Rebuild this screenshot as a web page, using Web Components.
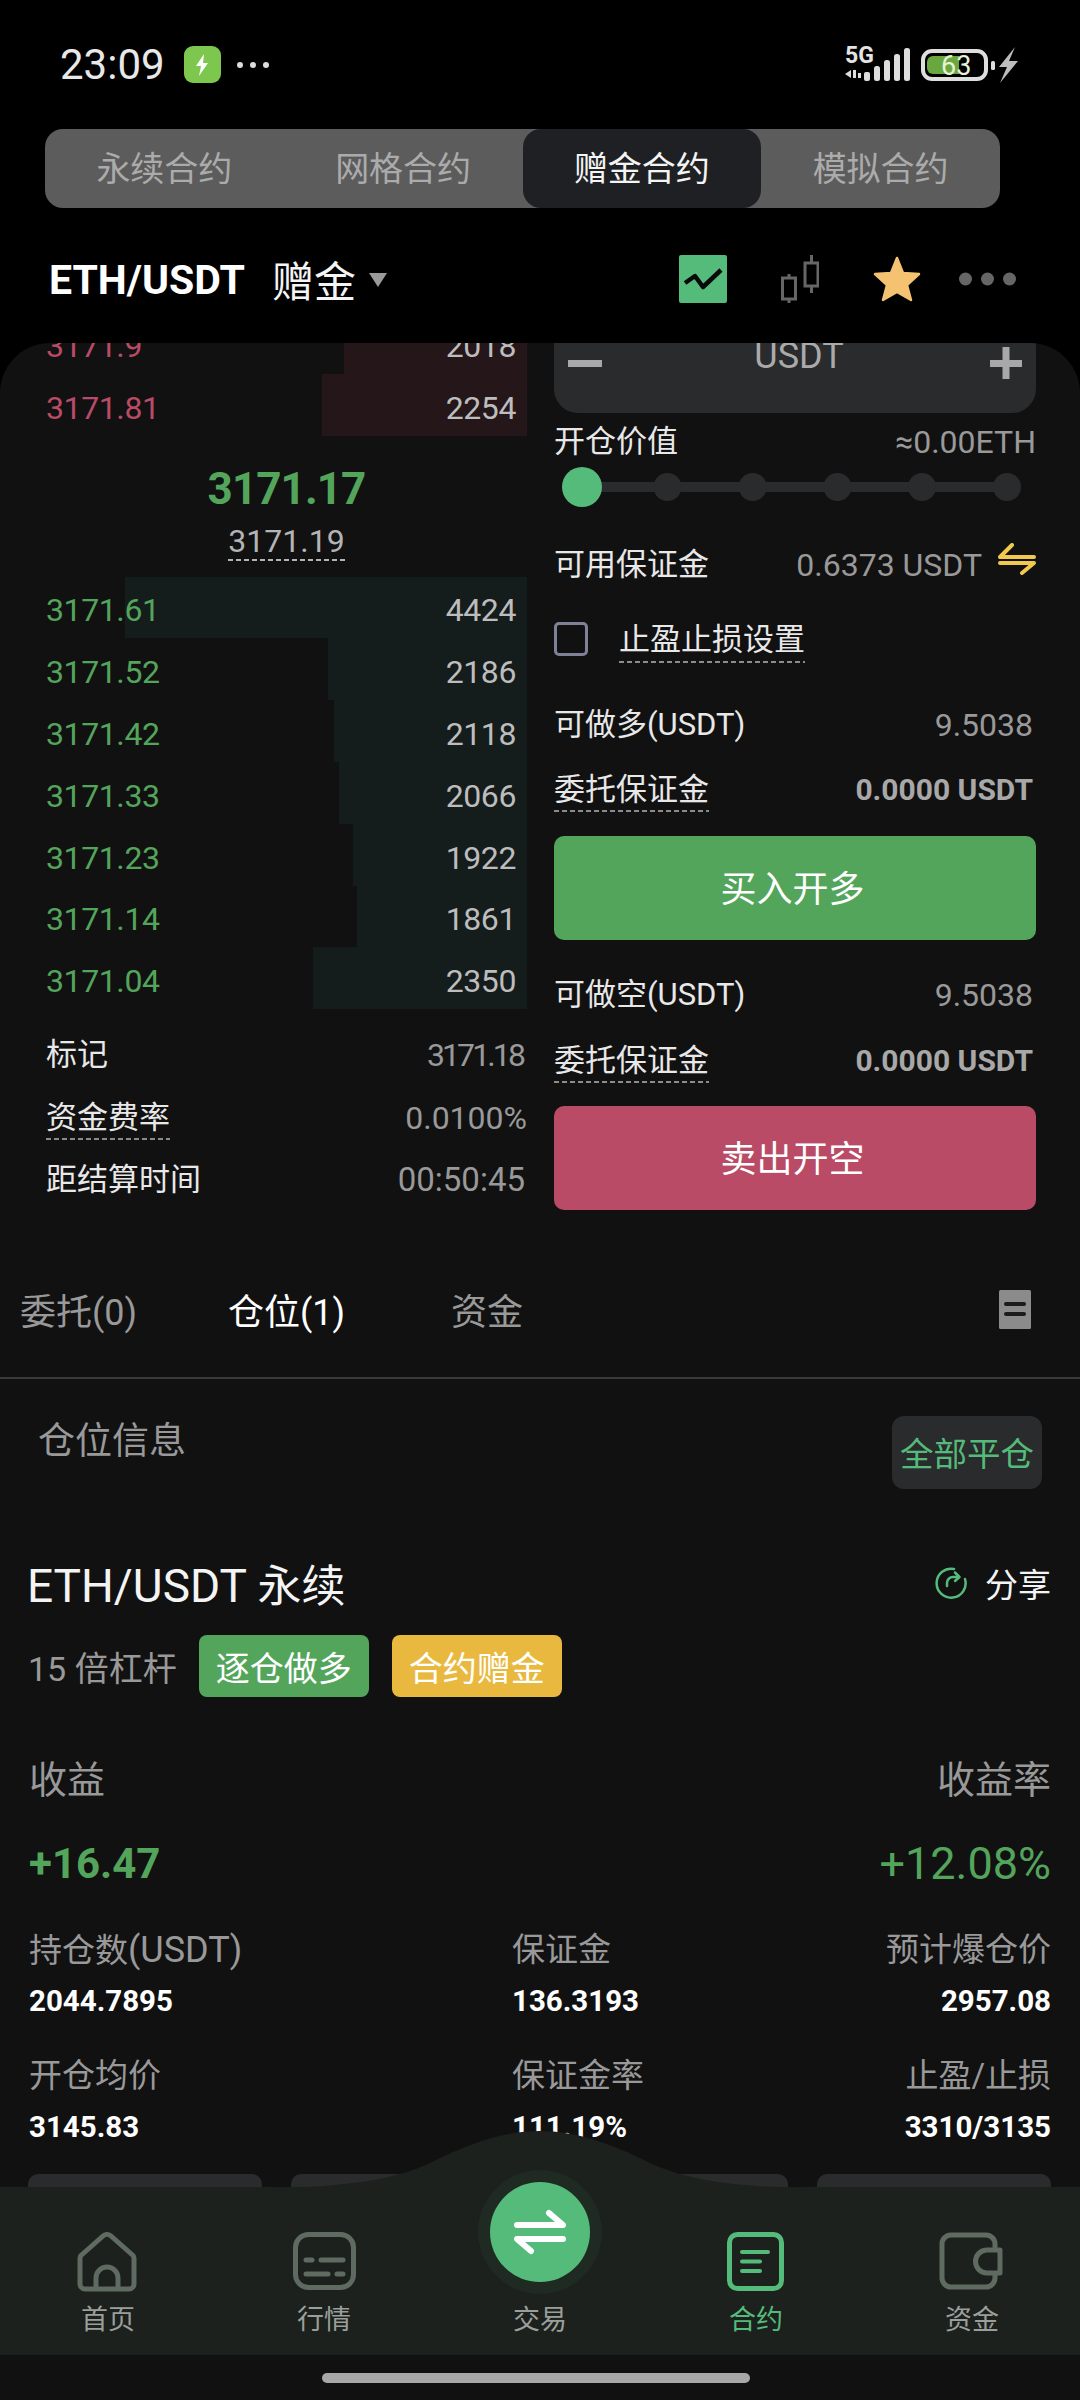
<!DOCTYPE html>
<html lang="zh">
<head>
<meta charset="utf-8">
<title>赠金合约</title>
<style>
    html, body { margin: 0; padding: 0; background: #000; }
    body {
        width: 1080px;
        height: 2400px;
        overflow: hidden;
        position: relative;
        color: #e8e8e8;
        font-family: Roboto, "Noto Sans CJK SC", sans-serif;
    }
</style>
</head>
<body>
<status-bar></status-bar>
<contract-tabs></contract-tabs>
<pair-header></pair-header>
<trade-panel></trade-panel>
<bottom-nav></bottom-nav>
<div style="position:absolute;left:322px;top:2373px;width:428px;height:10px;border-radius:5px;background:#a8a8a8"></div>

<script>
class StatusBar extends HTMLElement {
    connectedCallback() {
        let shadowRoot = this.attachShadow({ mode: 'open' });
        shadowRoot.innerHTML = `
        <style>
            :host { display: flex; align-items: center; height: 129px; padding: 0 62px 0 60px; width: 958px; }
            .time { font-size: 42px; line-height: 50px; color: #e8e8e8; }
            .app { width: 37px; height: 37px; margin-left: 19px; border-radius: 9px; background: #7ec74f; display: flex; align-items: center; justify-content: center; }
            .more { margin-left: 16px; display: flex; gap: 7px; }
            .more i { width: 6px; height: 6px; border-radius: 50%; background: #dcdcdc; }
            .right { margin-left: auto; display: flex; }
        </style>
        <span class="time">23:09</span>
        <span class="app"><svg width="18" height="24" viewBox="0 0 18 24"><path d="M11 1 L3 13 H8 L6 23 L15 10 H10 Z" fill="#fff"/></svg></span>
        <span class="more"><i></i><i></i><i></i></span>
        <svg class="right" width="175" height="56" viewBox="0 -8 175 56">
            <text x="2" y="18" font-size="23" font-weight="700" fill="#e4e4e4" font-family="Roboto, sans-serif">5G</text>
            <path d="M2 29 l6-4 v8 Z M10 25 h3 v8 h-3 Z M15 28 h3 v5 h-3 Z" fill="#ddd"/>
            <rect x="21" y="27" width="6" height="9" rx="2" fill="#ddd"/>
            <rect x="31" y="21" width="6" height="15" rx="2.5" fill="#ddd"/>
            <rect x="41" y="15" width="6" height="21" rx="2.5" fill="#ddd"/>
            <rect x="51" y="9" width="6" height="27" rx="2.5" fill="#ddd"/>
            <rect x="61" y="3" width="6" height="33" rx="2.5" fill="#ddd"/>
            <rect x="80" y="6" width="63" height="28" rx="9" fill="none" stroke="#dedede" stroke-width="4"/>
            <path d="M90 11 H116 V29 H90 a6 6 0 0 1-6-6 V17 a6 6 0 0 1 6-6 Z" fill="#6aa83f"/>
            <text x="98" y="30" font-size="27" fill="#e4f2d8" font-family="Roboto, sans-serif">63</text>
            <rect x="148" y="16" width="4" height="9" rx="1.5" fill="#ddd"/>
            <path d="M172 2 L156 22 H164 L157 38 L175 16 H166 Z" fill="#bdbdbd"/>
        </svg>
        `;
    }
}

class ContractTabs extends HTMLElement {
    connectedCallback() {
        let shadowRoot = this.attachShadow({ mode: 'open' });
        let tabs = ['永续合约', '网格合约', '赠金合约', '模拟合约'];
        shadowRoot.innerHTML = `
        <style>
            :host { display: grid; grid-template-columns: repeat(4, 1fr); width: 955px; height: 79px; margin-left: 45px; border-radius: 18px; background: #5c5c5c; }
            div { display: flex; align-items: center; justify-content: center; box-sizing: border-box; padding-bottom: 5px; font-size: 34px; color: #ababab; border-radius: 18px; }
            .on { background: #1f2023; color: #f4f4f4; }
        </style>
        ${tabs.map((t, i) => `<div class="${i === 2 ? 'on' : ''}">${t}</div>`).join('')}
        `;
    }
}

class PairHeader extends HTMLElement {
    connectedCallback() {
        let shadowRoot = this.attachShadow({ mode: 'open' });
        shadowRoot.innerHTML = `
        <style>
            :host { display: flex; align-items: center; height: 126px; padding: 9px 64px 0 49px; width: 967px; }
            .pair { font-size: 41px; font-weight: 700; color: #fff; }
            .kind { font-size: 42px; color: #f4f4f4; margin-left: 27px; margin-top: -3px; }
            .caret { margin-left: 13px; width: 0; height: 0; border-left: 9px solid transparent; border-right: 9px solid transparent; border-top: 14px solid #9a9a9a; }
            .icons { margin-left: auto; display: flex; align-items: center; margin-top: -2px; }
        </style>
        <span class="pair">ETH/USDT</span>
        <span class="kind">赠金</span>
        <span class="caret"></span>
        <span class="icons">
            <svg width="48" height="48" viewBox="0 0 48 48"><rect width="48" height="48" rx="2" fill="#55bb7b"/><path d="M6 28 L16 21 L24 32 L42 15" fill="none" stroke="#0a0a0a" stroke-width="4.5" stroke-linejoin="round"/></svg>
            <svg style="margin-left:54px" width="38" height="48" viewBox="0 0 38 48" fill="none" stroke="#666" stroke-width="3"><rect x="1.500" y="23" width="13" height="21"/><path d="M8 19 V23 M8 44 V48"/><rect x="24" y="8" width="13" height="23"/><path d="M30.500 0 V8 M30.500 31 V38"/></svg>
            <svg style="margin-left:54px" width="48" height="48" viewBox="0 0 48 48"><path d="M24 3 L30 18 L46 19 L34 30 L38 45 L24 37 L10 45 L14 30 L2 19 L18 18 Z" fill="#f5c272" stroke="#f5c272" stroke-width="2.5" stroke-linejoin="round"/></svg>
            <svg style="margin-left:38px" width="57" height="14" viewBox="0 0 57 14" fill="#666"><circle cx="6.500" cy="7" r="6.500"/><circle cx="28.500" cy="7" r="6.500"/><circle cx="50.500" cy="7" r="6.500"/></svg>
        </span>
        `;
    }
}

class DashText extends HTMLElement {
    connectedCallback() {
        let shadowRoot = this.attachShadow({ mode: 'open' });
        shadowRoot.innerHTML = `
        <style>
            :host { display: inline-block; position: relative; }
            i { position: absolute; left: 0; right: 0; bottom: var(--dash-bottom, -5px); height: 2px; background: repeating-linear-gradient(to right, var(--dash-color, #8c8c8c) 0 5px, transparent 5px 8px); }
        </style>
        <slot></slot><i></i>
        `;
    }
}

class InfoRow extends HTMLElement {
    connectedCallback() {
        let shadowRoot = this.attachShadow({ mode: 'open' });
        shadowRoot.innerHTML = `
        <style>
            :host { display: flex; align-items: center; justify-content: space-between; height: 60px; font-size: 31px; line-height: 36px; }
            .label { color: #e8e8e8; }
            .value { color: #999; white-space: nowrap; font-size: 32px; }
        </style>
        <span class="label"><slot name="label"></slot></span>
        <span class="value"><slot name="value"></slot></span>
        `;
    }
}

class BookRow extends HTMLElement {
    connectedCallback() {
        let shadowRoot = this.attachShadow({ mode: 'open' });
        let ask = this.getAttribute('side') === 'ask';
        let bar = ask ? '#241619' : '#151c1c';
        let depth = this.getAttribute('depth') + 'px';
        shadowRoot.innerHTML = `
        <style>
            :host { display: flex; align-items: center; justify-content: space-between; height: 61.8px; padding-right: 11px; font-size: 32px; letter-spacing: -0.4px; }
            span { margin-top: 6px; }
            .price { color: ${ask ? '#b94b66' : '#54a55c'}; }
            .qty { color: #bdbdbd; }
        </style>
        <span class="price">${this.getAttribute('price')}</span>
        <span class="qty">${this.getAttribute('qty')}</span>
        `;
        this.style.background = `linear-gradient(to left, ${bar} ${depth}, transparent ${depth})`;
    }
}

class OrderBook extends HTMLElement {
    connectedCallback() {
        let shadowRoot = this.attachShadow({ mode: 'open' });
        shadowRoot.innerHTML = `
        <style>
            :host { display: block; padding-left: 46px; width: 481px; margin-top: -31px; }
            .mid { height: 141px; display: flex; flex-direction: column; align-items: center; box-sizing: border-box; padding-top: 27px; }
            .last { font-size: 44px; letter-spacing: -0.9px; line-height: 52px; font-weight: 700; color: #54a55c; }
            .mark { margin-top: 7px; font-size: 32px; line-height: 38px; color: #b4b4b4; --dash-bottom: -1px; --dash-color: #b4b4b4; }
            .info { margin-top: 15px; }
            info-row { height: 62.5px; --dash-bottom: -4px; }
        </style>
        <book-row side="ask" price="3171.9" qty="2018" depth="183"></book-row>
        <book-row side="ask" price="3171.81" qty="2254" depth="205"></book-row>
        <div class="mid">
            <span class="last">3171.17</span>
            <dash-text class="mark">3171.19</dash-text>
        </div>
        <book-row side="bid" price="3171.61" qty="4424" depth="402"></book-row>
        <book-row side="bid" price="3171.52" qty="2186" depth="199"></book-row>
        <book-row side="bid" price="3171.42" qty="2118" depth="193"></book-row>
        <book-row side="bid" price="3171.33" qty="2066" depth="188"></book-row>
        <book-row side="bid" price="3171.23" qty="1922" depth="174"></book-row>
        <book-row side="bid" price="3171.14" qty="1861" depth="170"></book-row>
        <book-row side="bid" price="3171.04" qty="2350" depth="214"></book-row>
        <div class="info">
            <info-row><span slot="label">标记</span><span slot="value" style="letter-spacing:-2.9px;margin-right:4px;display:block">3171.18</span></info-row>
            <info-row><dash-text slot="label">资金费率</dash-text><span slot="value">0.0100%</span></info-row>
            <info-row><span slot="label">距结算时间</span><span slot="value" style="margin-right:2px;display:block;font-size:33px">00:50:45</span></info-row>
        </div>
        `;
    }
}

class TradeSlider extends HTMLElement {
    connectedCallback() {
        let shadowRoot = this.attachShadow({ mode: 'open' });
        shadowRoot.innerHTML = `
        <style>
            :host { display: block; height: 40px; margin-bottom: -4px; margin-top: -4px; }
        </style>
        <svg width="482" height="40" viewBox="0 0 482 40">
            <rect x="28" y="15" width="425" height="10" fill="#2a2b2c"/>
            <circle cx="113.500" cy="20" r="14" fill="#2a2b2c"/>
            <circle cx="198.700" cy="20" r="14" fill="#2a2b2c"/>
            <circle cx="283.500" cy="20" r="14" fill="#2a2b2c"/>
            <circle cx="368" cy="20" r="14" fill="#2a2b2c"/>
            <circle cx="453" cy="20" r="14" fill="#2a2b2c"/>
            <circle cx="28" cy="20" r="20" fill="#55bb7b"/>
        </svg>
        `;
    }
}

class ActionButton extends HTMLElement {
    connectedCallback() {
        let shadowRoot = this.attachShadow({ mode: 'open' });
        shadowRoot.innerHTML = `
        <style>
            :host { display: flex; align-items: center; justify-content: center; box-sizing: border-box; height: 104px; padding: 0 5px 5px 0; border-radius: 10px; font-size: 36px; color: #fff; }
        </style>
        <slot></slot>
        `;
    }
}

class OrderForm extends HTMLElement {
    connectedCallback() {
        let shadowRoot = this.attachShadow({ mode: 'open' });
        shadowRoot.innerHTML = `
        <style>
            :host { display: block; width: 482px; margin-left: 27px; margin-top: -30px; }
            .input { position: relative; display: flex; align-items: center; justify-content: space-between; height: 100px; padding: 0 14px; box-sizing: border-box; border-radius: 0 0 24px 24px; background: #292b2c; color: #aaa; }
            .input span { font-size: 36px; margin: 0 0 14px 6px; }
            .input i { background: #a8a8a8; height: 7px; display: block; }
            .open { height: 58px; }
            .check { display: flex; align-items: center; height: 60px; margin-top: 11px; font-size: 31px; --dash-bottom: -4px; }
            .box { width: 28px; height: 28px; border: 3px solid #7f8199; border-radius: 5px; margin-right: 31px; }
            .bold { font-weight: 700; color: #a8a8a8; font-size: 30px; margin-right: 3px; display: block; }
            .gap3 { margin-right: 3px; display: block; }
            info-row { --dash-bottom: -4px; }
        </style>
        <div class="input">
            <i style="width:34px"></i>
            <span>USDT</span>
            <svg width="32" height="32" viewBox="0 0 32 32" fill="#a8a8a8"><rect y="13" width="32" height="7"/><rect x="12.500" width="7" height="32"/></svg>
        </div>
        <info-row class="open"><span slot="label">开仓价值</span><span slot="value">≈0.00ETH</span></info-row>
        <trade-slider></trade-slider>
        <info-row style="margin-top:32px"><span slot="label">可用保证金</span>
            <span slot="value" style="display:flex;align-items:center;gap:16px">0.6373 USDT
                <svg width="38" height="32" viewBox="0 0 38 32" fill="none" stroke="#f0c94d" stroke-width="4" stroke-linecap="round" stroke-linejoin="round" style="margin-top:-12px"><path d="M14 2 L2 14 H36"/><path d="M2 20 H36 L24 30"/></svg>
            </span>
        </info-row>
        <div class="check"><span class="box" style="margin-top:6px"></span><dash-text>止盈止损设置</dash-text></div>
        <info-row style="margin-top:29px"><span slot="label">可做多(USDT)</span><span slot="value" class="gap3">9.5038</span></info-row>
        <info-row style="margin-top:5px"><dash-text slot="label">委托保证金</dash-text><span slot="value" class="bold">0.0000 USDT</span></info-row>
        <action-button style="margin-top:16px;background:#54a55c">买入开多</action-button>
        <info-row style="margin-top:25px"><span slot="label">可做空(USDT)</span><span slot="value" class="gap3">9.5038</span></info-row>
        <info-row style="margin-top:6px"><dash-text slot="label">委托保证金</dash-text><span slot="value" class="bold">0.0000 USDT</span></info-row>
        <action-button style="margin-top:15px;background:#b94b66">卖出开空</action-button>
        `;
    }
}

class PositionTabs extends HTMLElement {
    connectedCallback() {
        let shadowRoot = this.attachShadow({ mode: 'open' });
        shadowRoot.innerHTML = `
        <style>
            :host { display: flex; align-items: center; height: 136px; padding: 31px 49px 0 20px; border-bottom: 2px solid #3a3a3a; font-size: 36px; color: #999; }
            .a { width: 208px; }
            .b { width: 223px; color: #fff; }
            svg { margin-left: auto; }
        </style>
        <span class="a">委托(0)</span>
        <span class="b">仓位(1)</span>
        <span>资金</span>
        <svg width="32" height="39" viewBox="0 0 32 39"><rect width="32" height="39" rx="1.500" fill="#8b8b8b"/><rect x="5" y="12" width="22" height="4" rx="2" fill="#1b1b1b"/><rect x="5" y="22" width="22" height="4" rx="2" fill="#1b1b1b"/></svg>
        `;
    }
}

class PositionCard extends HTMLElement {
    connectedCallback() {
        let shadowRoot = this.attachShadow({ mode: 'open' });
        let cells = [
            ['持仓数<span style="font-size:36px">(USDT)</span>', '2044.7895'], ['保证金', '136.3193'], ['预计爆仓价', '2957.08'],
            ['开仓均价', '3145.83'], ['保证金率', '111.19%'], ['止盈/止损', '3310/3135']
        ];
        shadowRoot.innerHTML = `
        <style>
            :host { display: block; padding: 0 29px; }
            .row { display: flex; align-items: center; justify-content: space-between; }
            .head { align-items: flex-start; padding: 37px 9px 0; }
            .head > span { font-size: 37px; line-height: 48px; color: #999; margin-top: 2px; }
            .close { width: 150px; height: 73px; box-sizing: border-box; padding-bottom: 3px; border-radius: 12px; background: #292b2c; color: #55bb7b; font-size: 33.5px; display: flex; align-items: center; justify-content: center; }
            .title { height: 60px; margin-top: 64px; font-size: 46px; color: #f4f4f4; }
            .title .name { margin-left: -2px; }
            .title .name em { font-style: normal; font-size: 44px; }
            .share { display: flex; align-items: center; gap: 18px; font-size: 33px; }
            .meta { display: flex; align-items: center; height: 62px; margin-top: 22px; font-size: 34px; color: #999; }
            .tag { width: 170px; height: 62px; border-radius: 8px; color: #fff; font-size: 34px; display: flex; align-items: center; justify-content: center; margin-right: 23px; }
            .pnl { height: 48px; margin-top: 55px; font-size: 38px; color: #999; }
            .gain { height: 60px; margin-top: 33px; color: #54a55c; font-size: 45px; }
            .gain b { font-size: 42px; font-weight: 700; }
            .grid { display: grid; grid-template-columns: 483px 1fr 1fr; margin-top: 34px; }
            .cell:nth-child(3n) { text-align: right; }
            .cell:nth-child(n+4) { margin-top: 32px; }
            .cell div { font-size: 33px; line-height: 46px; height: 46px; color: #999; white-space: nowrap; }
            .cell strong { display: block; margin-top: 8px; font-size: 29.5px; line-height: 40px; font-weight: 700; color: #fff; }
            .btns { display: grid; grid-template-columns: repeat(4, 234px); gap: 29px; margin: 27px 0 0 -1px; }
            .btns i { height: 60px; border-radius: 10px; background: #292b2c; }
        </style>
        <div class="row head"><span>仓位信息</span><div class="close">全部平仓</div></div>
        <div class="row title"><span class="name">ETH/USDT <em>永续</em></span>
            <span class="share">
                <svg width="32" height="32" viewBox="0 0 32 32" fill="none" stroke="#55bb7b" stroke-width="2.5" stroke-linecap="round" stroke-linejoin="round"><path d="M19 2 A14.500 14.500 0 1 0 30 12"/><path d="M12 19 V16 a6 6 0 0 1 6-6 H24 M20 5.500 L24.500 10 L20 14"/></svg>
                <span>分享</span>
            </span>
        </div>
        <div class="meta"><span style="margin:0 22px 0 -1px">15 倍杠杆</span><span class="tag" style="background:#54a55c">逐仓做多</span><span class="tag" style="background:#e9b93f">合约赠金</span></div>
        <div class="row pnl"><span>收益</span><span>收益率</span></div>
        <div class="row gain"><b>+16.47</b><span>+12.08%</span></div>
        <div class="grid">
            ${cells.map(c => `<div class="cell"><div>${c[0]}</div><strong>${c[1]}</strong></div>`).join('')}
        </div>
        <div class="btns"><i></i><i></i><i></i><i></i></div>
        `;
    }
}

class TradePanel extends HTMLElement {
    connectedCallback() {
        let shadowRoot = this.attachShadow({ mode: 'open' });
        shadowRoot.innerHTML = `
        <style>
            :host { display: block; height: 2057px; overflow: hidden; border-radius: 50px 50px 0 0; background: #111112; }
            .top { display: flex; height: 867px; }
        </style>
        <div class="top"><order-book></order-book><order-form></order-form></div>
        <position-tabs></position-tabs>
        <position-card></position-card>
        `;
    }
}

class NavItem extends HTMLElement {
    connectedCallback() {
        let shadowRoot = this.attachShadow({ mode: 'open' });
        shadowRoot.innerHTML = `
        <style>
            :host { display: flex; flex-direction: column; align-items: center; padding-top: 45px; font-size: 27px; line-height: 36px; color: #9a9f9b; }
            .icon { height: 60px; display: flex; }
            .label { margin-top: 10px; }
            :host([active]) { color: #55bb7b; }
        </style>
        <div class="icon"><slot name="icon"></slot></div>
        <div class="label"><slot></slot></div>
        `;
    }
}

class BottomNav extends HTMLElement {
    connectedCallback() {
        let shadowRoot = this.attachShadow({ mode: 'open' });
        let c = '#5f6a61';
        shadowRoot.innerHTML = `
        <style>
            :host { position: absolute; left: 0; bottom: 45px; width: 1080px; height: 168px; background: #1c211d; display: grid; grid-template-columns: repeat(5, 216px); }
            .hump { position: absolute; left: 0; top: -56px; }
            .halo { position: absolute; left: 478px; top: -17px; width: 124px; height: 124px; border-radius: 50%; background: #1f2a23; display: flex; align-items: center; justify-content: center; }
            .ball { width: 100px; height: 100px; border-radius: 50%; background: #55bb7b; display: flex; align-items: center; justify-content: center; }
            nav-item { position: relative; }
        </style>
        <svg class="hump" width="1080" height="57" viewBox="0 0 1080 57"><path d="M270 57 C350 56 395 48 430 32 C470 12 505 0 540 0 C575 0 610 12 650 32 C685 48 730 56 810 57 Z" fill="#1c211d"/></svg>
        <div class="halo"><div class="ball">
            <svg width="60" height="50" viewBox="0 0 60 50" fill="none" stroke="#fff" stroke-width="6" stroke-linecap="round" stroke-linejoin="round"><path d="M7 18 H53 L39 6"/><path d="M53 32 H7 L21 44"/></svg>
        </div></div>
        <nav-item>
            <svg slot="icon" style="margin-left:-2px" width="60" height="60" viewBox="0 0 60 60" fill="none" stroke="${c}" stroke-width="5" stroke-linejoin="round"><path d="M3 26 a4 4 0 0 1 1.500-3 L26 4 a6 6 0 0 1 8 0 L55.500 23 a4 4 0 0 1 1.500 3 V52 a5 5 0 0 1-5 5 H8 a5 5 0 0 1-5-5 Z"/><path d="M19 57 V46 a11 11 0 0 1 22 0 V57"/></svg>
            首页
        </nav-item>
        <nav-item>
            <svg slot="icon" width="63" height="58" viewBox="0 0 63 58" fill="none" stroke="${c}" stroke-width="5" stroke-linecap="round"><rect x="2.500" y="2.500" width="58" height="53" rx="13"/><path d="M13 28 H19 M28 28 H50 M13 42 H35 M44 42 H50"/></svg>
            行情
        </nav-item>
        <nav-item>
            <span slot="icon" style="display:block;width:60px"></span>
            交易
        </nav-item>
        <nav-item active>
            <svg slot="icon" style="margin-left:-2px" width="57" height="59" viewBox="0 0 57 59" fill="none" stroke="#55bb7b" stroke-width="5" stroke-linecap="round"><rect x="2.500" y="2.500" width="52" height="54" rx="8"/><path d="M15 20 H41 M15 29.500 H33 M15 39 H33" stroke-width="4"/></svg>
            合约
        </nav-item>
        <nav-item>
            <svg slot="icon" style="margin-left:-2px" width="64" height="58" viewBox="0 0 64 58" fill="none" stroke="${c}" stroke-width="5" stroke-linejoin="round"><path d="M56 17 V12 a9 9 0 0 0-9-9 H12 a9 9 0 0 0-9 9 V46 a9 9 0 0 0 9 9 H47 a9 9 0 0 0 9-9 V41"/><path d="M61 18 H48 a11.500 11.500 0 0 0 0 23 H61 Z"/></svg>
            资金
        </nav-item>
        `;
    }
}

window.customElements.define('status-bar', StatusBar);
window.customElements.define('contract-tabs', ContractTabs);
window.customElements.define('pair-header', PairHeader);
window.customElements.define('dash-text', DashText);
window.customElements.define('info-row', InfoRow);
window.customElements.define('book-row', BookRow);
window.customElements.define('order-book', OrderBook);
window.customElements.define('trade-slider', TradeSlider);
window.customElements.define('action-button', ActionButton);
window.customElements.define('order-form', OrderForm);
window.customElements.define('position-tabs', PositionTabs);
window.customElements.define('position-card', PositionCard);
window.customElements.define('trade-panel', TradePanel);
window.customElements.define('nav-item', NavItem);
window.customElements.define('bottom-nav', BottomNav);
</script>
</body>
</html>
